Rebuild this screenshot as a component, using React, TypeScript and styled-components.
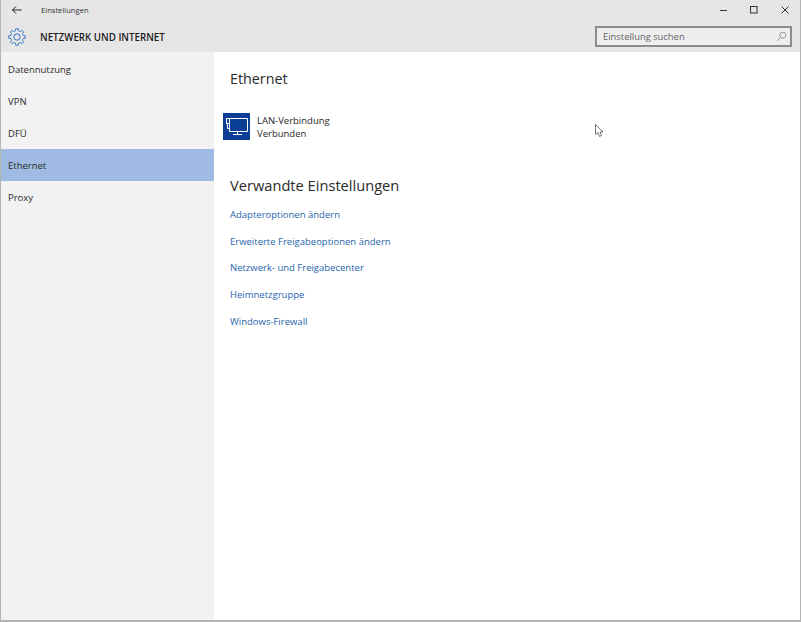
import React from "react";
import styled, { createGlobalStyle } from "styled-components";

const Global = createGlobalStyle`
  html, body { margin: 0; padding: 0; background: #fff; }
  #root { width: 801px; height: 622px; overflow: hidden; }
  * { box-sizing: border-box; }
`;
const Win = styled.div`
  position: relative;
  width: 801px; height: 622px;
  display: flex; flex-direction: column;
  border: 1px solid #b4b4b4; border-top: 0; border-bottom-width: 2px;
  font-family: "Open Sans", "Noto Sans", sans-serif;
  color: #222;
  background: #fff;
`;
const TitleBar = styled.div`
  height: 20px; flex: none; background: #e6e6e6;
  display: flex; align-items: center;
  padding-left: 10px;
`;
const BackBtn = styled.div`width: 12px; height: 12px; display: flex; margin-right: 18px;`;
const TitleText = styled.span`font-size: 7.6px; color: #333; flex: 1;`;
const WinBtns = styled.div`display: flex; height: 20px;`;
const WinBtn = styled.div`width: 30.5px; display: flex; align-items: center; justify-content: center;`;
const Header = styled.div`
  height: 32px; flex: none; background: #e6e6e6;
  display: flex; align-items: center;
  padding: 1px 8px 0 7px;
`;
const HeaderTitle = styled.div`
  font-size: 9.75px; font-weight: 600; color: #1a1a1a; margin: 2px 0 0 14px; flex: 1;
`;
const Search = styled.div`
  width: 197px; height: 21px; border: 2px solid #8c8c8c; background: #eeeeee;
  display: flex; align-items: center; justify-content: space-between;
  padding: 0 3px 0 6px; margin-top: -1px;
  font-size: 9.4px; color: #666;
`;
const Body = styled.div`flex: 1; display: flex; min-height: 0;`;
const Side = styled.nav`
  width: 213px; flex: none; background: #f2f2f2; padding-top: 1px;
`;
const Item = styled.div<{ $active?: boolean }>`
  height: 32px; padding-left: 7px; display: flex; align-items: center;
  font-size: 9.5px; color: #2a2a2a;
  background: ${(p) => (p.$active ? "#9fbbe3" : "transparent")};
`;
const Main = styled.main`flex: 1; padding: 16px 0 0 16px;`;
const H1 = styled.h1`
  margin: 0; font-size: 14.3px; font-weight: 400; line-height: 22px; color: #2a2a2a;
`;
const Conn = styled.div`
  display: flex; align-items: flex-start; margin: 23px 0 0 -7px; height: 28px;
`;
const ConnIcon = styled.div`width: 27px; height: 27px; background: #0b3f96; flex: none;`;
const ConnText = styled.div`
  margin: 1px 0 0 7px; font-size: 9.5px; line-height: 13px; color: #2a2a2a;
`;
const H2 = styled.h2`
  margin: 33px 0 0; font-size: 14.65px; font-weight: 400; line-height: 22px; color: #2a2a2a;
`;
const Links = styled.div`display: flex; flex-direction: column; margin-top: 5px;`;
const LinkItem = styled.a`
  height: 26.75px; display: flex; align-items: center;
  font-size: 9.5px; color: #2865ab;
`;
const Cursor = styled.svg`position: absolute; left: 594px; top: 124px;`;

const items = ["Datennutzung", "VPN", "DFÜ", "Ethernet", "Proxy"];
const links = [
  "Adapteroptionen ändern",
  "Erweiterte Freigabeoptionen ändern",
  "Netzwerk- und Freigabecenter",
  "Heimnetzgruppe",
  "Windows-Firewall",
];

const gearPath = (() => {
  const pts: string[] = [];
  const teeth = 8;
  for (let i = 0; i < teeth; i++) {
    const a = (i * 2 * Math.PI) / teeth;
    const w = (2 * Math.PI) / teeth;
    const seq: [number, number][] = [
      [6.2, a - w * 0.5],
      [6.4, a - w * 0.3],
      [8.3, a - w * 0.2],
      [8.3, a + w * 0.2],
      [6.4, a + w * 0.3],
    ];
    seq.forEach(([r, t]) => {
      pts.push(`${(9 + r * Math.sin(t)).toFixed(2)} ${(9 - r * Math.cos(t)).toFixed(2)}`);
    });
  }
  return `M${pts.join("L")}Z`;
})();

export default function App() {
  return (
    <Win>
      <Global />
      <TitleBar>
        <BackBtn>
          <svg width="12" height="12" viewBox="0 0 12 12" fill="none" stroke="#222" strokeWidth="1">
            <path d="M1.5 6H10.5M5 2.5L1.5 6L5 9.5" />
          </svg>
        </BackBtn>
        <TitleText>Einstellungen</TitleText>
        <WinBtns>
          <WinBtn>
            <svg width="10" height="10" viewBox="0 0 10 10" fill="none" stroke="#333"><path d="M1 5.5H8" /></svg>
          </WinBtn>
          <WinBtn>
            <svg width="10" height="10" viewBox="0 0 10 10" fill="none" stroke="#333"><rect x="1.5" y="1.5" width="6.5" height="6.5" /></svg>
          </WinBtn>
          <WinBtn>
            <svg width="10" height="10" viewBox="0 0 10 10" fill="none" stroke="#333"><path d="M1.5 1.5L8.5 8.5M8.5 1.5L1.5 8.5" /></svg>
          </WinBtn>
        </WinBtns>
      </TitleBar>
      <Header>
        <svg width="18" height="18" viewBox="0 0 18 18" fill="none" stroke="#3a78c8" strokeWidth="1" strokeLinejoin="round">
          <path d={gearPath} />
          <circle cx="9" cy="9" r="3.2" />
        </svg>
        <HeaderTitle>NETZWERK UND INTERNET</HeaderTitle>
        <Search>
          <span>Einstellung suchen</span>
          <svg width="11" height="11" viewBox="0 0 11 11" fill="none" stroke="#999">
            <circle cx="6.8" cy="4.2" r="3" />
            <path d="M4.6 6.4L1 10" />
          </svg>
        </Search>
      </Header>
      <Body>
        <Side>
          {items.map((t) => (
            <Item key={t} $active={t === "Ethernet"}>{t}</Item>
          ))}
        </Side>
        <Main>
          <H1>Ethernet</H1>
          <Conn>
            <ConnIcon>
              <svg width="27" height="27" viewBox="0 0 27 27" fill="none" stroke="#fff" strokeWidth="1">
                <path d="M6.5 5.5H24.5V18.5H6.5V10.5" />
                <rect x="3.5" y="5.5" width="3" height="5" />
                <path d="M4.5 10.5V15.5H6.5M14.5 18.5V21.5M10 21.5H19" />
              </svg>
            </ConnIcon>
            <ConnText>LAN-Verbindung<br />Verbunden</ConnText>
          </Conn>
          <H2>Verwandte Einstellungen</H2>
          <Links>
            {links.map((l) => <LinkItem key={l}>{l}</LinkItem>)}
          </Links>
        </Main>
      </Body>
      <Cursor width="10" height="14" viewBox="0 0 10 14" fill="#fff" stroke="#555" strokeWidth="0.8">
        <path d="M0.5 0.5V10.5L3 8.5L4.5 12.5L6.5 11.5L5 8H8Z" />
      </Cursor>
    </Win>
  );
}
